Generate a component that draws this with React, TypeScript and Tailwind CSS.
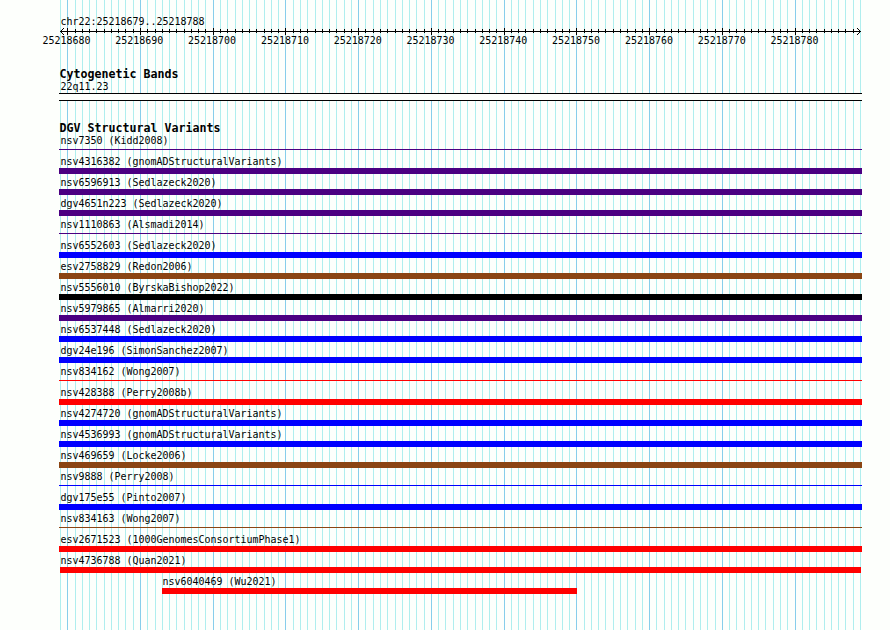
import React from "react";

const START = 25218679;
const BASES = 110;
const LEFT = 60;
const WIDTH = 800;

type Variant = { label: string; color: string; thin?: boolean; box?: string };

const INDIGO = "bg-[#4b0082]";
const BLUE = "bg-[#0000ff]";
const RED = "bg-[#ff0000]";
const BROWN = "bg-[#8b4513]";

const variants: Variant[] = [
  { label: "nsv7350 (Kidd2008)", color: INDIGO, thin: true },
  { label: "nsv4316382 (gnomADStructuralVariants)", color: INDIGO },
  { label: "nsv6596913 (Sedlazeck2020)", color: INDIGO },
  { label: "dgv4651n223 (Sedlazeck2020)", color: INDIGO },
  { label: "nsv1110863 (Alsmadi2014)", color: INDIGO, thin: true },
  { label: "nsv6552603 (Sedlazeck2020)", color: BLUE },
  { label: "esv2758829 (Redon2006)", color: BROWN },
  { label: "nsv5556010 (ByrskaBishop2022)", color: "bg-black" },
  { label: "nsv5979865 (Almarri2020)", color: INDIGO },
  { label: "nsv6537448 (Sedlazeck2020)", color: BLUE },
  { label: "dgv24e196 (SimonSanchez2007)", color: BLUE },
  { label: "nsv834162 (Wong2007)", color: RED, thin: true },
  { label: "nsv428388 (Perry2008b)", color: RED },
  { label: "nsv4274720 (gnomADStructuralVariants)", color: BLUE },
  { label: "nsv4536993 (gnomADStructuralVariants)", color: BLUE },
  { label: "nsv469659 (Locke2006)", color: BROWN },
  { label: "nsv9888 (Perry2008)", color: BLUE, thin: true },
  { label: "dgv175e55 (Pinto2007)", color: BLUE },
  { label: "nsv834163 (Wong2007)", color: BROWN, thin: true },
  { label: "esv2671523 (1000GenomesConsortiumPhase1)", color: RED },
  { label: "nsv4736788 (Quan2021)", color: RED, box: "ml-[60px] w-[801px]" },
  { label: "nsv6040469 (Wu2021)", color: RED, box: "ml-[162px] w-[415px]" },
];

const ticks = Array.from({ length: BASES + 1 }, (_, i) => ({
  x: Math.round(LEFT + (i * WIDTH) / BASES),
  base: START + i,
  major: (START + i) % 10 === 0,
}));

function Grid() {
  return (
    <svg className="absolute inset-0" width="890" height="630" shapeRendering="crispEdges" aria-hidden="true">
      {ticks.map((t) => (
        <rect key={t.base} x={t.x} y="0" width="1" height="630" fill={t.major ? "#87ceeb" : "#afeeee"} />
      ))}
    </svg>
  );
}

function Axis() {
  return (
    <svg className="block" width="890" height="9" shapeRendering="crispEdges" aria-hidden="true">
      <rect x="60" y="4" width="801" height="1" />
      {ticks.slice(1, -1).map((t) => (
        <rect key={t.base} x={t.x} y={t.major ? 1 : 2} width="1" height={t.major ? 7 : 4} />
      ))}
      {[1, 2, 3].map((d) => (
        <g key={d}>
          <rect x={60 + d} y={4 - d} width="1" height="1" />
          <rect x={60 + d} y={4 + d} width="1" height="1" />
          <rect x={860 - d} y={4 - d} width="1" height="1" />
          <rect x={860 - d} y={4 + d} width="1" height="1" />
        </g>
      ))}
    </svg>
  );
}

function Label({ children, className = "" }: { children: React.ReactNode; className?: string }) {
  return (
    <div
      className={`h-3 translate-x-[0.5px] text-[9.97px] leading-3 whitespace-pre origin-center scale-y-[1.08] ${className}`}
    >
      {children}
    </div>
  );
}

function Heading({ children }: { children: React.ReactNode }) {
  return (
    <h2 className="ml-[59px] h-3 translate-x-[0.5px] text-[11.63px] leading-3 font-bold whitespace-pre">{children}</h2>
  );
}

export default function App() {
  return (
    <main className="relative h-[630px] w-[890px] overflow-hidden bg-[#fdfffc] font-['DejaVu_Sans_Mono',monospace] text-black">
      <Grid />
      <div className="relative flex flex-col">
        <Label className="mt-[15px] ml-[60px] translate-y-px">chr22:25218679..25218788</Label>
        <Axis />
        <div className="-mt-px ml-[42px] flex">
          {ticks
            .filter((t) => t.major)
            .map((t) => (
              <Label key={t.base} className="w-[72.8px] shrink-0">
                {t.base}
              </Label>
            ))}
        </div>

        <section className="mt-[21px]">
          <Heading>Cytogenetic Bands</Heading>
          <Label className="ml-[60px] translate-y-px">22q11.23</Label>
          <div className="mt-px ml-[59px] h-2 w-[803px] border-y border-black bg-[#fdfffc]" />
        </section>

        <section className="mt-[21px]">
          <Heading>DGV Structural Variants</Heading>
          {variants.map((v) => (
            <div key={v.label} className={`flex h-[21px] flex-col ${v.box ?? "ml-[59px] w-[803px]"}`}>
              <Label className={`translate-y-px ${v.box ? "" : "pl-px"}`}>{v.label}</Label>
              <div className={v.thin ? `mt-[3px] h-px ${v.color}` : `mt-px h-1.5 ${v.color}`} />
            </div>
          ))}
        </section>
      </div>
    </main>
  );
}
